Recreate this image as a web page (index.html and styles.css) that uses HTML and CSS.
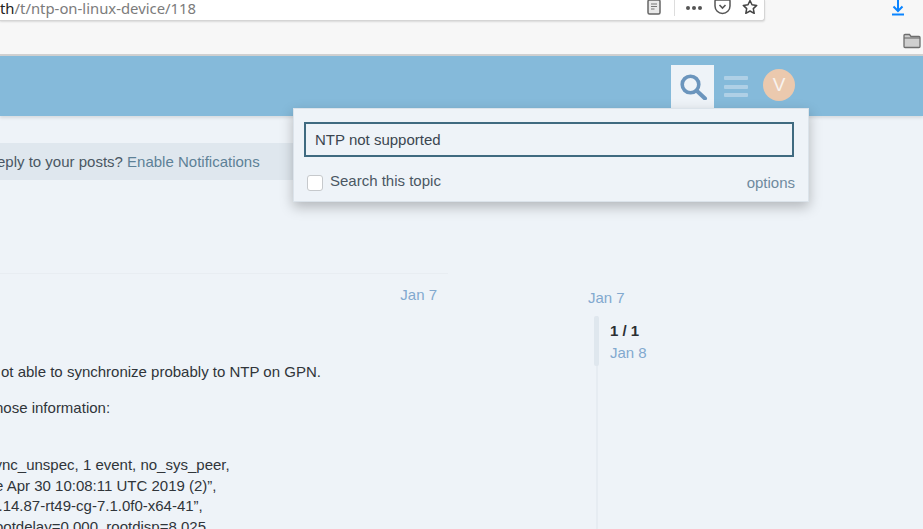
FILE: index.html
```html
<!DOCTYPE html>
<html lang="en">
<head>
<meta charset="utf-8">
<title>NTP on Linux device</title>
<link rel="stylesheet" href="styles.css">
</head>
<body>
<div class="chrome">
  <div class="toolbar">
    <div class="urlbar">
      <span class="url"><b>th</b>/t/ntp-on-linux-device/118</span>
      <div class="url-actions">
        <svg class="ic reader" width="16" height="16" viewBox="0 0 16 16"><rect x="2" y="1" width="12" height="14" rx="1.500" fill="#e9e9e9" stroke="#666" stroke-width="1.500"/><path d="M5 5h6M5 7.500h6M5 10h3.500" stroke="#777" stroke-width="1.200"/></svg>
        <span class="sep"></span>
        <span class="dots"><i></i><i></i><i></i></span>
        <svg class="ic" width="17" height="16" viewBox="0 0 17 16"><path d="M2 1h13a1 1 0 0 1 1 1v5a7.500 7.500 0 0 1-15 0V2a1 1 0 0 1 1-1z" fill="none" stroke="#555" stroke-width="1.500"/><path d="M5.500 6l3 3 3-3" fill="none" stroke="#555" stroke-width="1.600"/></svg>
        <svg class="ic" width="16" height="16" viewBox="0 0 16 16"><path d="M8 1.500l2 4.300 4.700.6-3.400 3.200.9 4.700L8 12l-4.200 2.300.9-4.700L1.300 6.400 6 5.800z" fill="none" stroke="#444" stroke-width="1.500" stroke-linejoin="round"/></svg>
      </div>
    </div>
    <svg class="download" width="16" height="16" viewBox="0 0 16 16"><path d="M8 0v10M3.500 6.500L8 11l4.500-4.500" fill="none" stroke="#0a84ff" stroke-width="2"/><path d="M2 14.500h12" stroke="#0a84ff" stroke-width="2"/></svg>
  </div>
  <div class="bookmarks">
    <svg width="18" height="16" viewBox="0 0 18 16"><path d="M1 4V2.500a1 1 0 0 1 1-1h4.500l1.500 2h8a1 1 0 0 1 1 1v9a1 1 0 0 1-1 1H2a1 1 0 0 1-1-1z" fill="#cfcfcf" stroke="#6e6e6e" stroke-width="1.300"/><path d="M1 5h16" stroke="#6e6e6e" stroke-width="1.100"/></svg>
  </div>
</div>
<header class="site-header">
  <div class="header-icons">
    <div class="search-tab">
      <svg width="28" height="26" viewBox="0 0 28 26"><circle cx="10.500" cy="10.500" r="8.300" fill="none" stroke="#6b95bd" stroke-width="3.600"/><path d="M17 17l8 7.500" stroke="#6b95bd" stroke-width="4" stroke-linecap="round"/></svg>
    </div>
    <div class="burger"><i></i><i></i><i></i></div>
    <div class="avatar">V</div>
  </div>
</header>
<main class="page">
  <div class="search-menu">
    <div class="search-input">NTP not supported</div>
    <div class="search-row">
      <label class="search-check"><span class="box"></span>Search this topic</label>
      <a class="options">options</a>
    </div>
  </div>
  <div class="content">
    <div class="post-col">
      <div class="notice"><span class="clip-notice">eply to your posts? <a>Enable Notifications</a></span></div>
      <div class="post">
        <div class="post-date">Jan 7</div>
        <p class="first">ot able to synchronize probably to NTP on GPN.</p>
        <p class="second">hose information:</p>
        <div class="code">
          <span class="line l1">ync_unspec, 1 event, no_sys_peer,</span>
          <span class="line l2">e Apr 30 10:08:11 UTC 2019 (2)”,</span>
          <span class="line l3">.14.87-rt49-cg-7.1.0f0-x64-41”,</span>
          <span class="line l4">ootdelay=0.000, rootdisp=8.025,</span>
        </div>
      </div>
    </div>
    <aside class="timeline">
      <div class="tl-start">Jan 7</div>
      <div class="tl-track">
        <div class="tl-handle"></div>
        <div class="tl-info"><strong>1 / 1</strong><span>Jan 8</span></div>
      </div>
    </aside>
  </div>
</main>
</body>
</html>
```
FILE: styles.css
```css
* { box-sizing: border-box; }
html, body { margin: 0; height: 100%; overflow: hidden; }
body { width: 923px; height: 529px; background: #eef3f8; font-family: "Liberation Sans", Arial, sans-serif; font-size: 15px; color: #2b2f33; }
.chrome { height: 56px; background: #f7f7f7; border-bottom: 2px solid #d0d0d0; overflow: hidden; }
.toolbar { height: 25px; display: flex; align-items: flex-start; }
.urlbar { width: 765px; height: 21px; background: #fff; border: 1px solid #d5d5d5; border-width: 0 1px 1px 0; border-radius: 0 0 3px 0; box-shadow: 0 1px 2px rgba(0,0,0,.12); display: flex; justify-content: space-between; padding-right: 6px; }
.url { font-family: "Noto Sans", sans-serif; font-size: 14.850px; color: #7b7b7b; line-height: 14px; margin-top: 1px; }
.url b { font-weight: 400; color: #222; }
.url-actions { display: flex; align-items: flex-start; margin-top: -1px; }
.ic { display: block; }
.reader { margin-right: 12px; }
.sep { width: 1px; height: 17px; background: #ddd; margin-right: 11px; }
.dots { display: flex; gap: 2px; margin: 7px 12px 0 0; }
.dots i { width: 4px; height: 4px; border-radius: 50%; background: #555; }
.url-actions .ic:last-child { margin-left: 11px; }
.download { margin: 0 0 0 125px; }
.bookmarks { display: flex; justify-content: flex-end; padding: 8px 2px 0 0; }
.site-header { height: 60px; background: #85bada; box-shadow: 0 2px 3px rgba(0,0,0,.1); display: flex; justify-content: flex-end; padding-right: 128px; }
.header-icons { display: flex; align-items: flex-start; padding-top: 9px; }
.search-tab { width: 43px; height: 51px; background: #eef3f8; display: flex; justify-content: center; padding: 9px 0 0 2px; }
.burger { width: 43px; height: 43px; display: flex; flex-direction: column; justify-content: center; align-items: center; gap: 4.500px; }
.burger i { width: 24px; height: 4px; border-radius: 1px; background: #afd0e6; }
.avatar { width: 32px; height: 32px; margin: 4px 0 0 6px; border-radius: 50%; background: #ebc9ae; color: #f8f3ee; font-size: 19px; display: flex; align-items: center; justify-content: center; }
.page { position: relative; height: 473px; }
.search-menu { position: absolute; left: 293px; top: -8px; width: 516px; height: 94px; background: #eef3f8; border: 1px solid #dbe3ea; box-shadow: 0 5px 12px rgba(0,0,0,.25); padding: 13px 10px 0; z-index: 2; }
.search-input { width: 490px; height: 35px; border: 2px solid #3f6a80; padding-left: 9px; line-height: 31px; color: #3b4650; }
.search-row { display: flex; justify-content: space-between; margin-top: 14px; padding: 0 3px 0 5px; color: #4a5763; }
.search-check { display: flex; align-items: center; line-height: 20px; }
.box { width: 16px; height: 16px; background: #fff; border: 1px solid #c6c9cc; border-radius: 3px; margin: 3px 7px 0 -2px; }
.options { color: #6f8a9e; margin-top: 3px; }
.content { display: flex; height: 473px; overflow: hidden; }
.post-col { width: 448px; padding-top: 27px; flex: none; }
.notice { width: 293px; height: 37px; background: #dfe7ee; line-height: 37px; color: #4a5763; white-space: nowrap; overflow: hidden; }
.clip-notice { display: block; margin-left: -3px; }
.notice a { color: #5d8197; }
.post { margin-top: 93px; border-top: 1px solid #e8edf2; line-height: 18px; }
.post-date { text-align: right; padding: 12px 11px 0 0; color: #82a9cf; line-height: 18px; }
.post p { margin: 0; white-space: nowrap; color: #30353a; }
.post .first { margin-top: 59px; margin-left: 1px; }
.post .second { margin-top: 18px; margin-left: -5px; }
.code { margin-top: 38px; line-height: 20.500px; color: #30353a; white-space: nowrap; }
.line { display: block; }
.l1 { margin-left: -5.500px; }
.l2 { margin-left: -5px; }
.l3 { margin-left: -1.500px; }
.l4 { margin-left: -5px; }
.timeline { margin-left: 140px; padding-top: 173px; width: 120px; flex: none; }
.tl-start { color: #82a9cf; line-height: 18px; }
.tl-track { margin: 9px 0 0 8px; display: flex; border-left: 2px solid #e6ecf2; min-height: 240px; position: relative; }
.tl-handle { position: absolute; left: -4px; top: 0; width: 5px; height: 50px; border-radius: 2px; background: #dfe7ee; }
.tl-info { padding: 4px 0 0 12px; display: flex; flex-direction: column; line-height: 22px; }
.tl-info strong { color: #2b2f33; }
.tl-info span { color: #82a9cf; }
```
